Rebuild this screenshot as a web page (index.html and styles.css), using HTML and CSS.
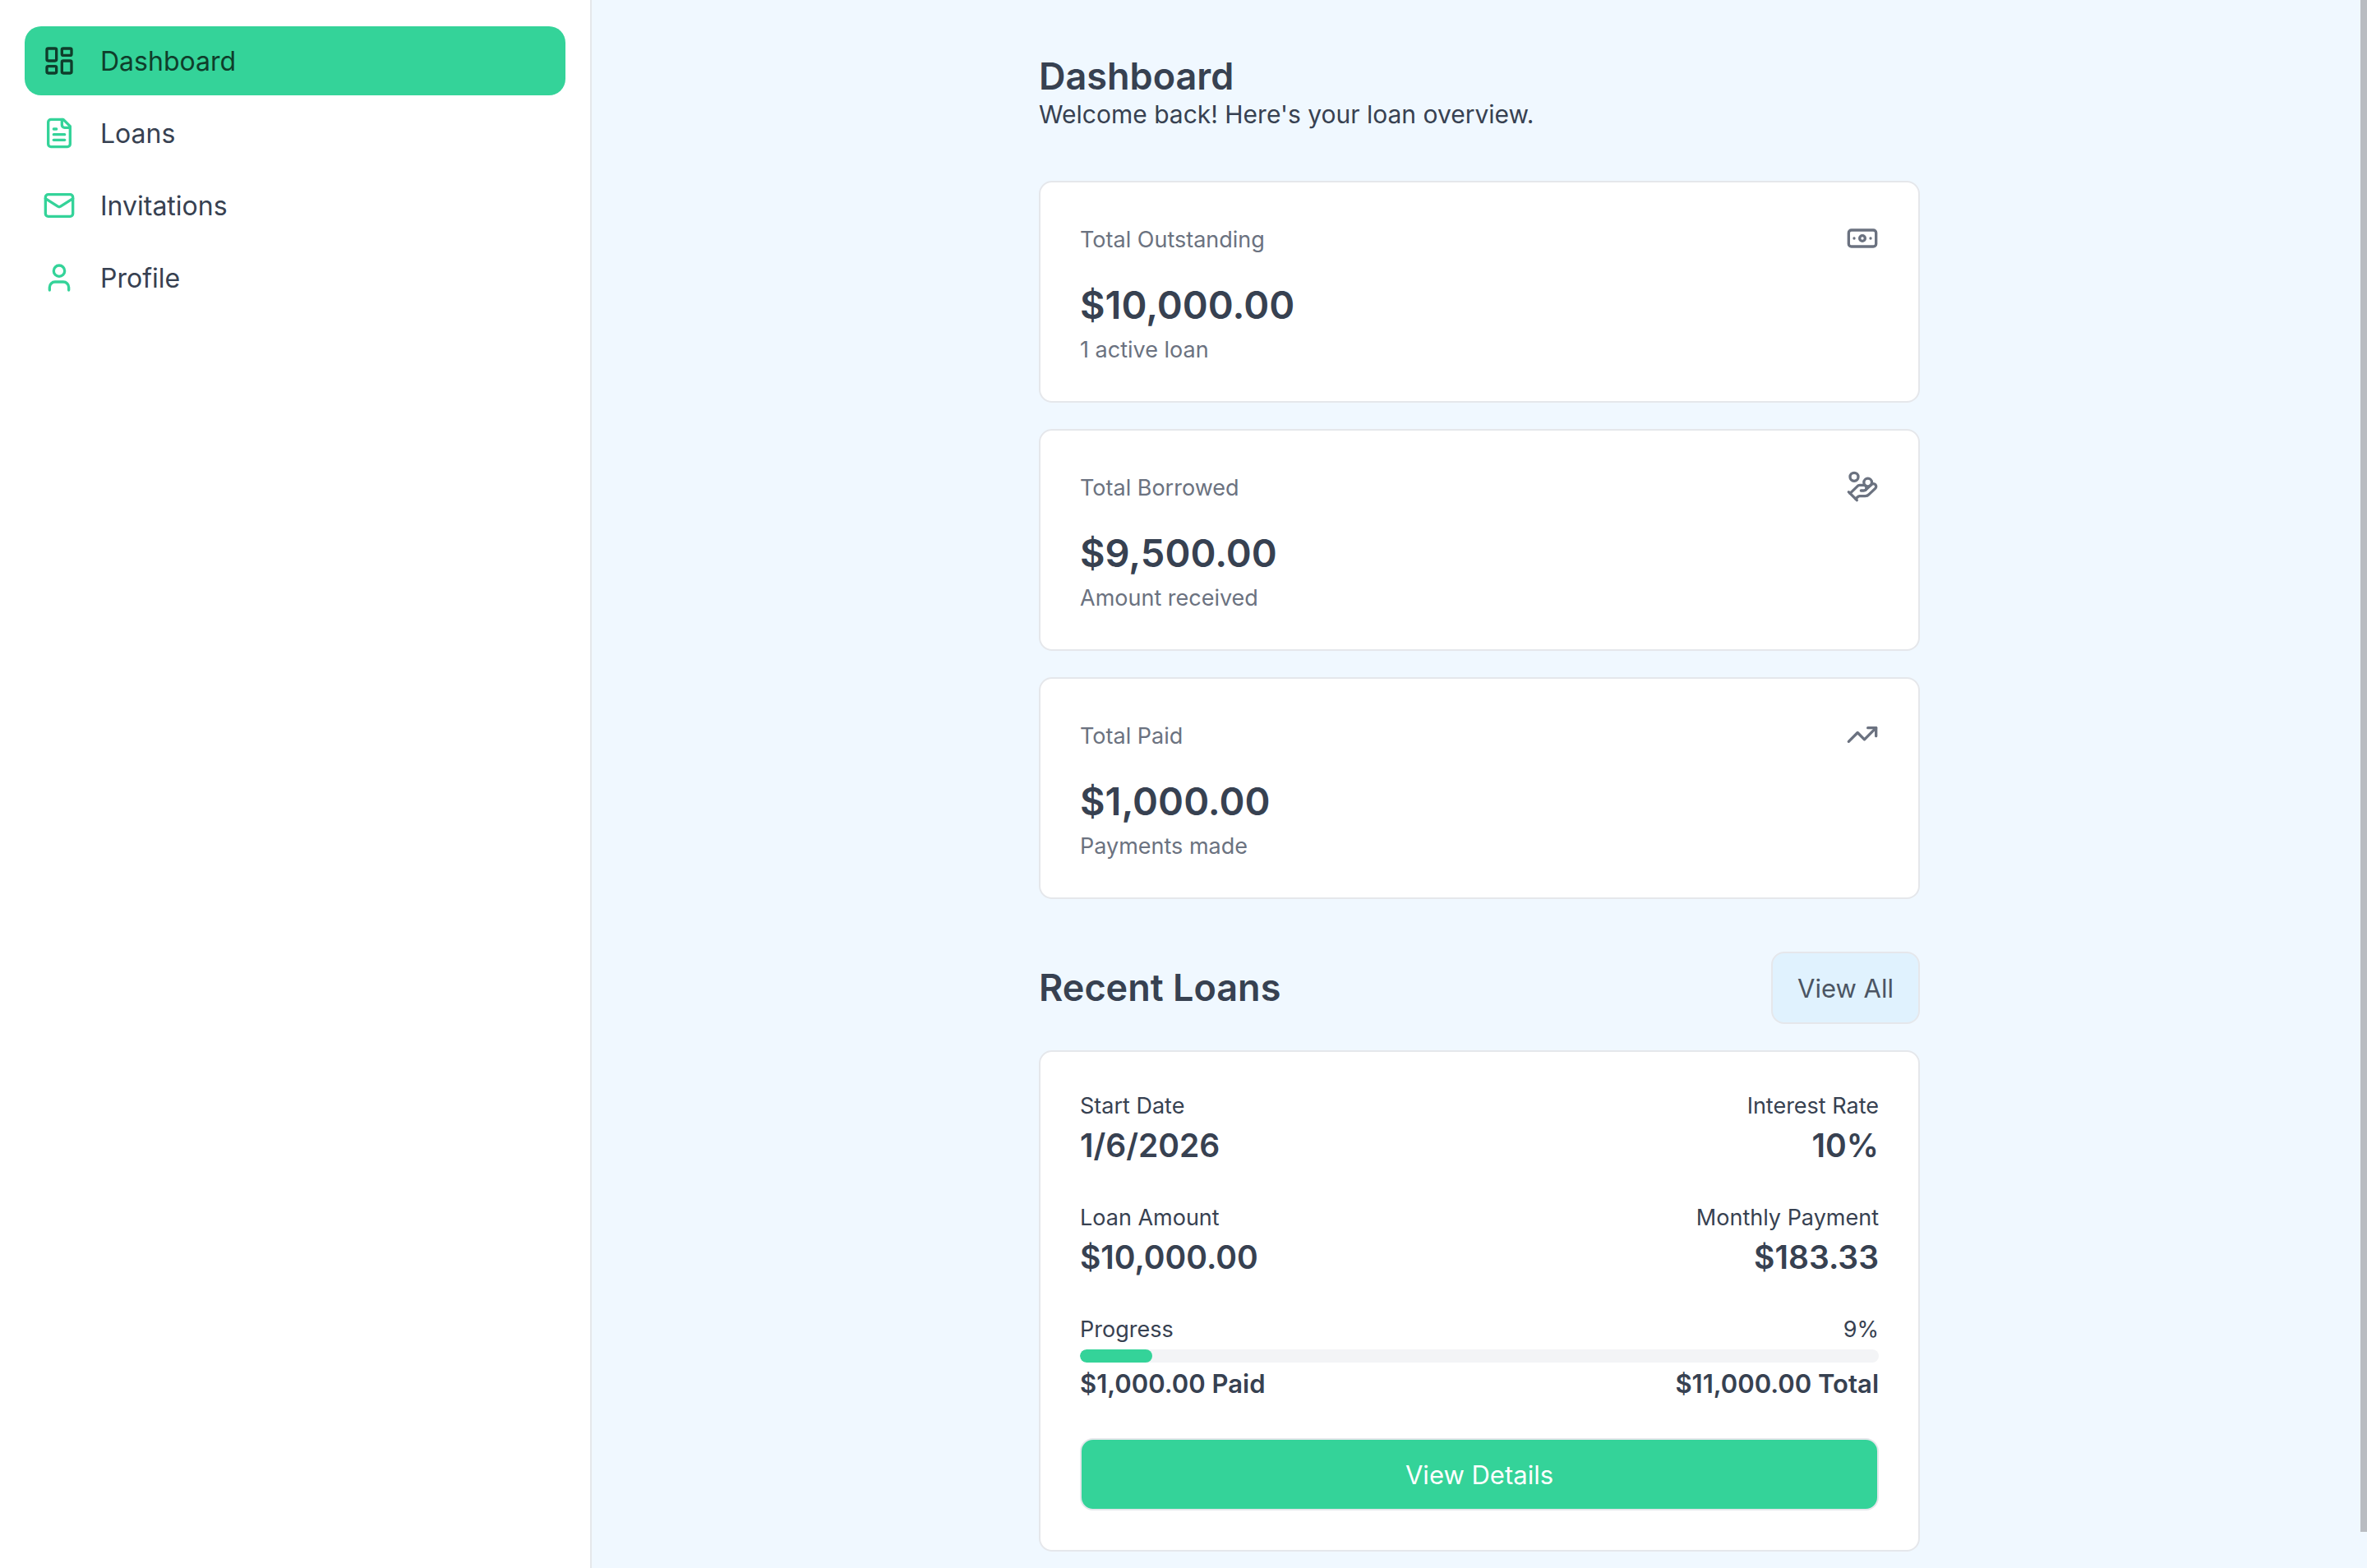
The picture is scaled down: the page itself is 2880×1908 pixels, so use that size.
FILE: index.html
```html
<!DOCTYPE html>
<html lang="en">
<head>
  <meta charset="UTF-8">
  <meta name="viewport" content="width=device-width, initial-scale=1.0">
  <title>Dashboard</title>
  <link rel="stylesheet" href="styles.css">
</head>
<body>
  <!-- Sidebar -->
  <aside class="sidebar">
    <nav class="nav">
      <a href="#" class="nav-link active" aria-current="page">
        <svg class="icon" viewBox="0 0 24 24"><rect x="3" y="3" width="7" height="9" rx="1"/><rect x="14" y="3" width="7" height="5" rx="1"/><rect x="14" y="12" width="7" height="9" rx="1"/><rect x="3" y="16" width="7" height="5" rx="1"/></svg>
        <span>Dashboard</span>
      </a>
      <a href="#" class="nav-link">
        <svg class="icon" viewBox="0 0 24 24"><path d="M15 2H6a2 2 0 0 0-2 2v16a2 2 0 0 0 2 2h12a2 2 0 0 0 2-2V7Z"/><path d="M14 2v4a2 2 0 0 0 2 2h4"/><path d="M10 9H8"/><path d="M16 13H8"/><path d="M16 17H8"/></svg>
        <span>Loans</span>
      </a>
      <a href="#" class="nav-link">
        <svg class="icon" viewBox="0 0 24 24"><rect x="2" y="4" width="20" height="16" rx="2"/><path d="m22 7-8.97 5.7a1.94 1.94 0 0 1-2.06 0L2 7"/></svg>
        <span>Invitations</span>
      </a>
      <a href="#" class="nav-link">
        <svg class="icon" viewBox="0 0 24 24"><path d="M19 21v-2a4 4 0 0 0-4-4H9a4 4 0 0 0-4 4v2"/><circle cx="12" cy="7" r="4"/></svg>
        <span>Profile</span>
      </a>
    </nav>
  </aside>

  <!-- Main Content -->
  <main class="main">
    <div class="container">
      <header class="page-header">
        <h1>Dashboard</h1>
        <p>Welcome back! Here's your loan overview.</p>
      </header>

      <section class="stats">
        <div class="card stat">
          <div class="stat-top">
            <h3>Total Outstanding</h3>
            <svg class="icon" viewBox="0 0 24 24"><rect x="2" y="6" width="20" height="12" rx="2"/><circle cx="12" cy="12" r="2"/><path d="M6 12h.01M18 12h.01"/></svg>
          </div>
          <p class="stat-value">$10,000.00</p>
          <p class="stat-note">1 active loan</p>
        </div>
        <div class="card stat">
          <div class="stat-top">
            <h3>Total Borrowed</h3>
            <svg class="icon" viewBox="0 0 24 24"><path d="M11 15h2a2 2 0 1 0 0-4h-3c-.6 0-1.1.2-1.4.6L3 17"/><path d="m7 21 1.6-1.4c.3-.4.8-.6 1.4-.6h4c1.1 0 2.1-.4 2.8-1.2l4.6-4.4a2 2 0 0 0-2.75-2.91l-4.2 3.9"/><path d="m2 16 6 6"/><circle cx="16" cy="9" r="2.9"/><circle cx="6" cy="5" r="3"/></svg>
          </div>
          <p class="stat-value">$9,500.00</p>
          <p class="stat-note">Amount received</p>
        </div>
        <div class="card stat">
          <div class="stat-top">
            <h3>Total Paid</h3>
            <svg class="icon" viewBox="0 0 24 24"><path d="M16 7h6v6"/><path d="m22 7-8.5 8.5-5-5L2 17"/></svg>
          </div>
          <p class="stat-value">$1,000.00</p>
          <p class="stat-note">Payments made</p>
        </div>
      </section>

      <section class="recent">
        <div class="section-header">
          <h2>Recent Loans</h2>
          <button type="button" class="btn btn-secondary">View All</button>
        </div>

        <div class="card loan">
          <dl class="loan-details">
            <div>
              <dt>Start Date</dt>
              <dd>1/6/2026</dd>
            </div>
            <div class="right">
              <dt>Interest Rate</dt>
              <dd>10%</dd>
            </div>
            <div>
              <dt>Loan Amount</dt>
              <dd>$10,000.00</dd>
            </div>
            <div class="right">
              <dt>Monthly Payment</dt>
              <dd>$183.33</dd>
            </div>
          </dl>

          <div class="progress">
            <div class="row progress-label">
              <span id="progressLabel">Progress</span>
              <span>9%</span>
            </div>
            <div class="progress-track" role="progressbar" aria-labelledby="progressLabel" aria-valuenow="9" aria-valuemin="0" aria-valuemax="100">
              <div class="progress-bar" style="width: 9.09%"></div>
            </div>
            <div class="row progress-total">
              <span>$1,000.00 Paid</span>
              <span>$11,000.00 Total</span>
            </div>
          </div>

          <button type="button" class="btn btn-primary">View Details</button>
        </div>
      </section>
    </div>
  </main>

  <div class="scroll-thumb"></div>
</body>
</html>
```
FILE: styles.css
```css
:root {
  --background: #f0f8ff;
  --foreground: #374151;
  --card: #fff;
  --primary: #34d399;
  --primary-dark: #0f3d2b;
  --secondary: #e0f2fe;
  --secondary-text: #4b5563;
  --muted: #f3f4f6;
  --muted-text: #6b7280;
  --border: #e5e7eb;
}

* {
  margin: 0;
  padding: 0;
  box-sizing: border-box;
}

body {
  display: flex;
  min-height: 100vh;
  font-family: Inter, "Liberation Sans", sans-serif;
  font-size: 32px;
  background: var(--background);
  color: var(--foreground);
}

.icon {
  width: 40px;
  height: 40px;
  flex-shrink: 0;
  fill: none;
  stroke: currentColor;
  stroke-width: 2;
  stroke-linecap: round;
  stroke-linejoin: round;
}

/* Sidebar */
.sidebar {
  width: 25%;
  padding: 32px 30px;
  background: var(--card);
  border-right: 2px solid var(--border);
}

.nav {
  display: flex;
  flex-direction: column;
  gap: 4px;
}

.nav-link {
  display: flex;
  align-items: center;
  gap: 30px;
  height: 84px;
  padding: 0 22px;
  border-radius: 20px;
  color: var(--foreground);
  text-decoration: none;
}

.nav-link .icon {
  color: var(--primary);
}

.nav-link.active,
.nav-link.active .icon {
  color: var(--primary-dark);
}

.nav-link.active {
  background: var(--primary);
}

/* Main */
.main {
  flex: 1;
  padding: 64px 32px 20px;
}

.container {
  max-width: 1072px;
  margin: 0 auto;
}

h1,
h2 {
  font-size: 45px;
  font-weight: 600;
  line-height: 58px;
}

.page-header p {
  font-size: 30px;
  line-height: 34px;
}

.card {
  background: var(--card);
  border: 2px solid var(--border);
  border-radius: 16px;
}

/* Stats */
.stats {
  display: flex;
  flex-direction: column;
  gap: 32px;
  margin: 64px 0;
}

.stat {
  padding: 48px 48px 40px;
}

.stat-top {
  display: flex;
  justify-content: space-between;
  align-items: flex-start;
  margin-bottom: 24px;
  color: var(--muted-text);
}

.stat h3,
.stat-note {
  font-size: 27px;
  font-weight: 400;
  line-height: 44px;
  color: var(--muted-text);
}

.stat-value {
  font-size: 47px;
  font-weight: 600;
  line-height: 66px;
}

/* Recent loans */
.section-header {
  display: flex;
  justify-content: space-between;
  align-items: center;
  margin-bottom: 32px;
}

.loan {
  padding: 48px;
}

.loan-details {
  display: grid;
  grid-template-columns: 1fr 1fr;
  gap: 40px;
}

.right {
  text-align: right;
}

dt,
.progress-label {
  font-size: 27px;
  line-height: 36px;
}

dd {
  font-size: 39px;
  font-weight: 600;
  line-height: 60px;
}

.row {
  display: flex;
  justify-content: space-between;
}

.progress {
  display: flex;
  flex-direction: column;
  gap: 6px;
  margin: 40px 0 46px;
}

.progress-track {
  height: 16px;
  border-radius: 8px;
  background: var(--muted);
  overflow: hidden;
}

.progress-bar {
  height: 100%;
  border-radius: 8px;
  background: var(--primary);
}

.progress-total {
  font-size: 31px;
  font-weight: 600;
  line-height: 40px;
}

/* Buttons */
.btn {
  height: 88px;
  padding: 0 30px;
  border: 2px solid var(--border);
  border-radius: 16px;
  font-family: inherit;
  font-size: 31px;
  font-weight: 400;
  cursor: pointer;
}

.btn-primary {
  display: block;
  width: 100%;
  background: var(--primary);
  color: #fff;
}

.btn-secondary {
  background: var(--secondary);
  color: var(--secondary-text);
}

/* Scrollbar thumb over the right edge */
.scroll-thumb {
  position: fixed;
  top: 0;
  right: 0;
  bottom: 44px;
  width: 8px;
  background: #b9bcc1;
}
```
